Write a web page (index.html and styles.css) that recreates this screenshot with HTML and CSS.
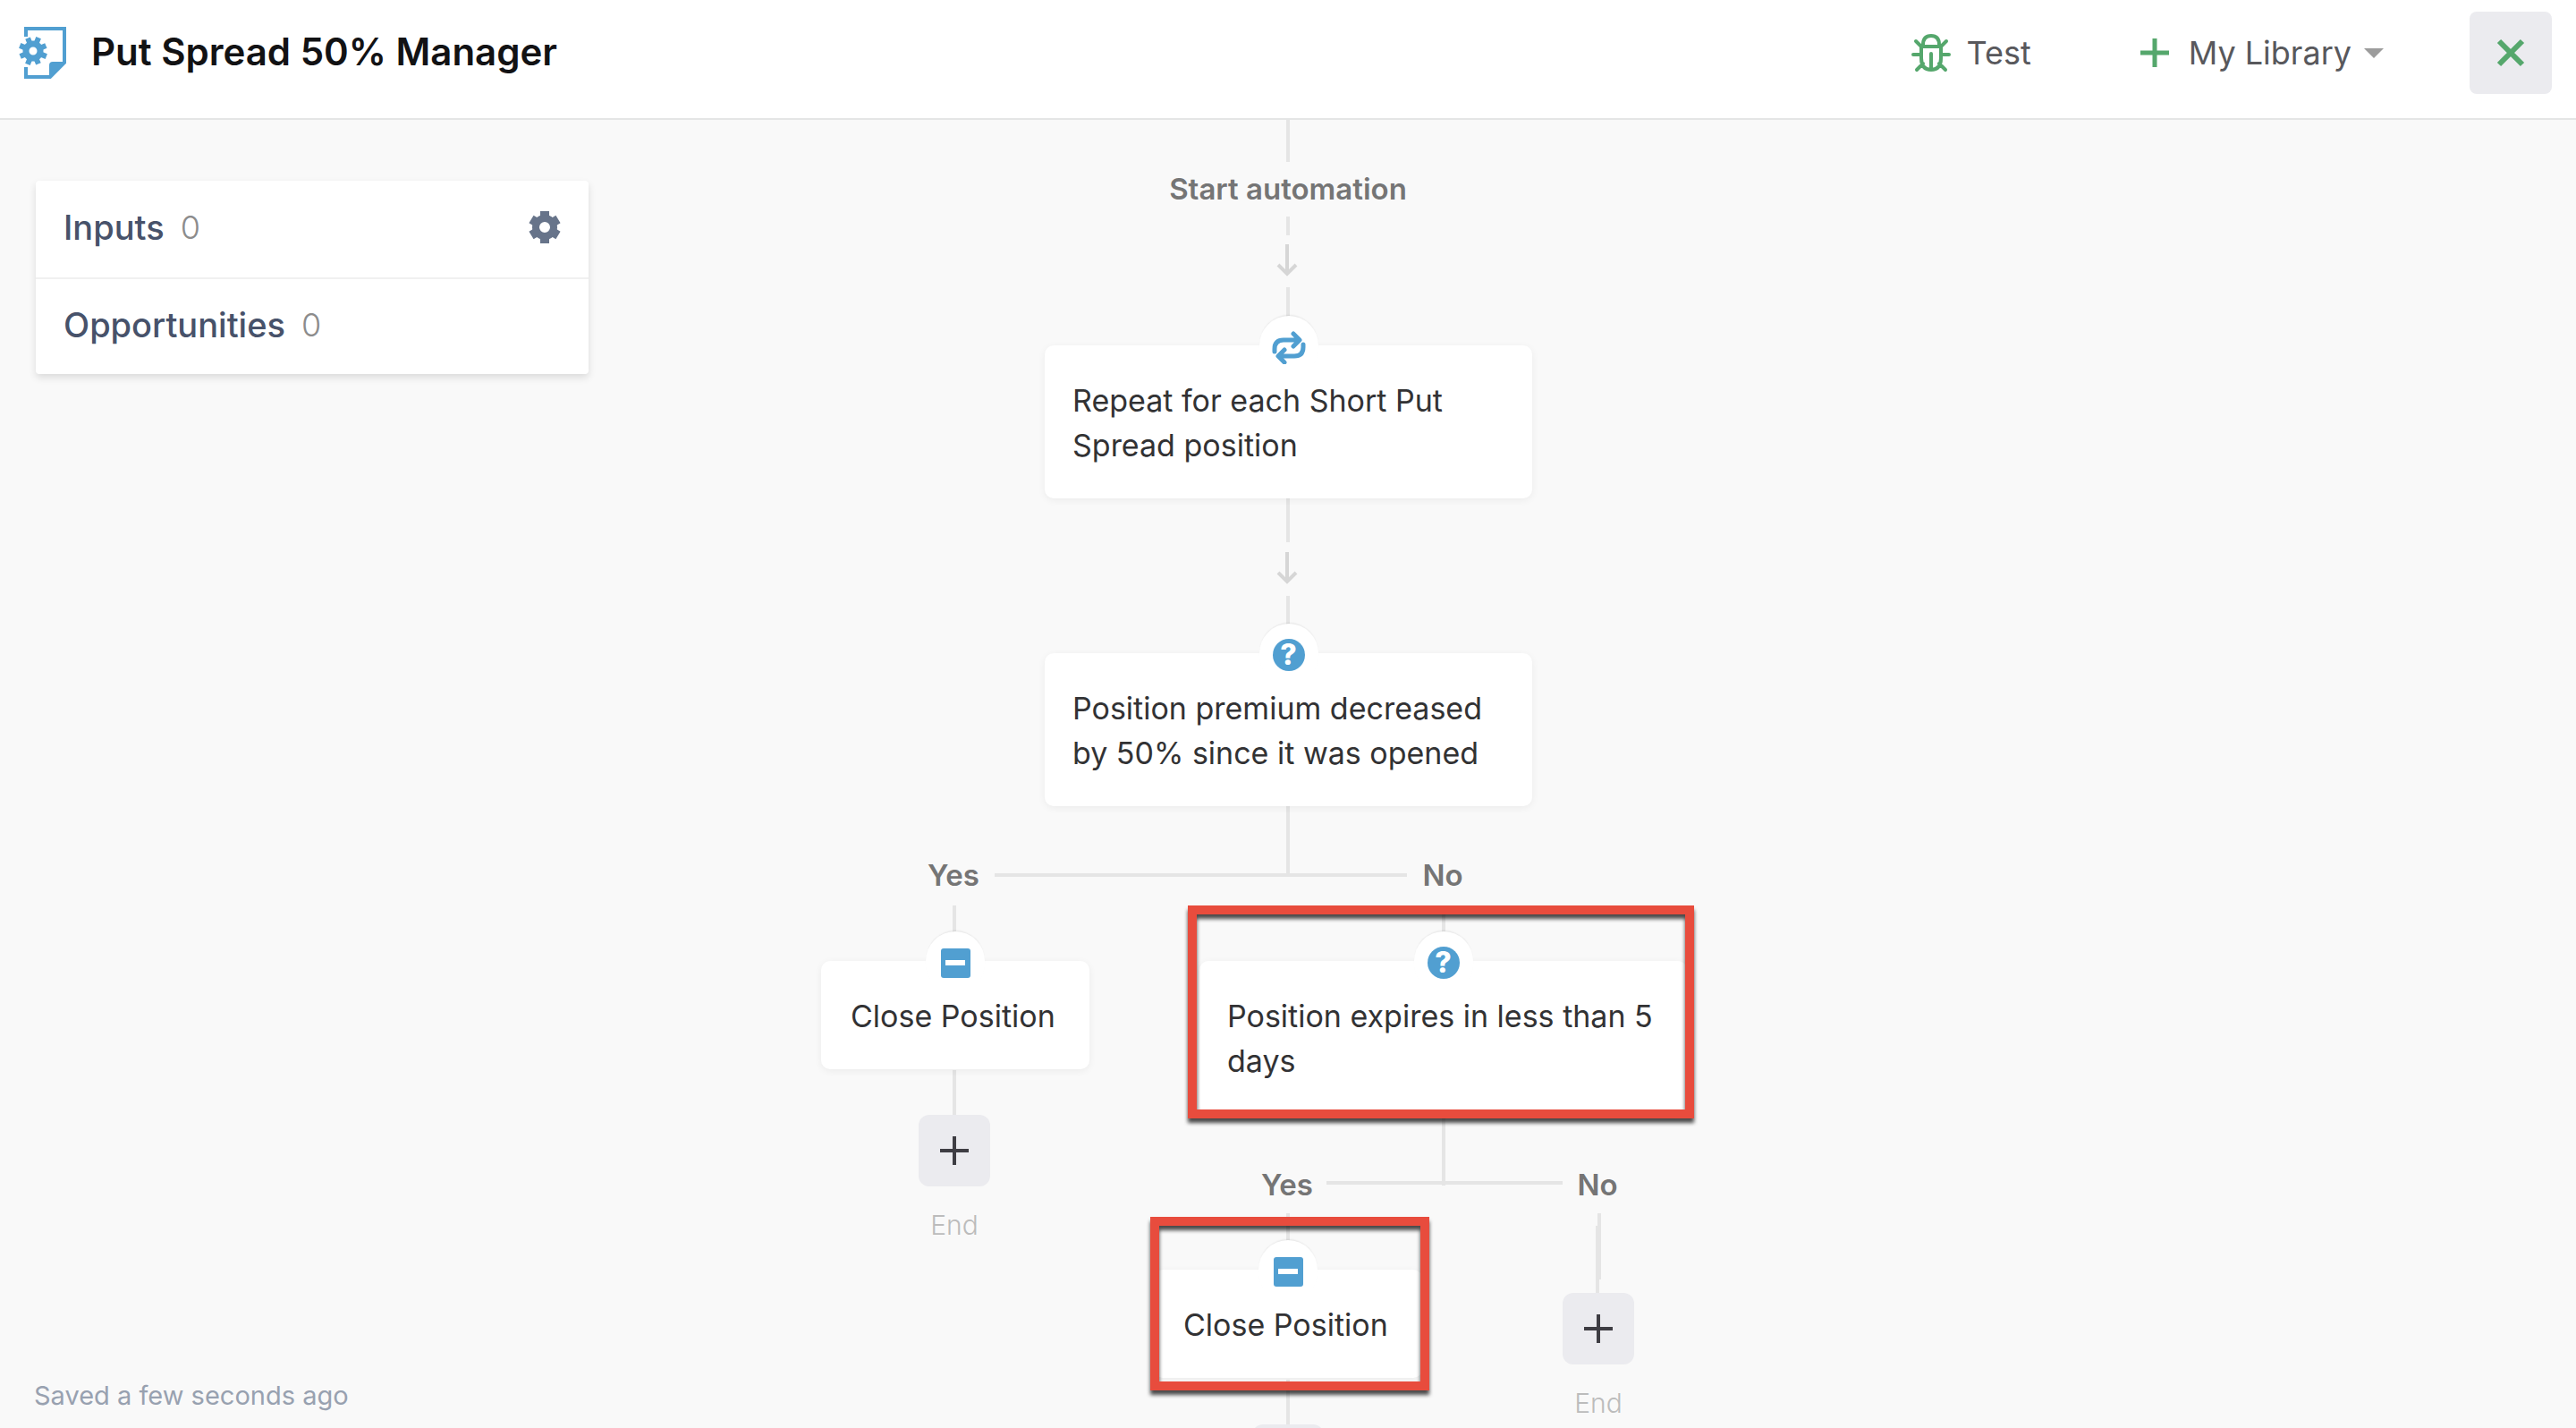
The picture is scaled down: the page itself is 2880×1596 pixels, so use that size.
FILE: index.html
```
<!DOCTYPE html>
<html lang="en">
<head>
    <meta charset="UTF-8">
    <meta name="viewport" content="width=device-width, initial-scale=1.0">
    <title>Put Spread 50% Manager</title>
    <link rel="stylesheet" href="styles.css">
</head>
<body>
    <header class="topbar">
        <svg class="logo" viewBox="0 0 54 60" width="54" height="60">
            <path d="M9 12V3H52V41L36 57H9V46" fill="none" stroke="#519fd1" stroke-width="4"/>
            <path d="M35 58V44Q35 40 39 40H53Z" fill="#519fd1"/>
            <g transform="rotate(22.5 17 28)" stroke="#519fd1" stroke-width="6">
                <path d="M17 12V44M1 28H33M6 17L28 39M28 17L6 39"/>
            </g>
            <circle cx="17" cy="28" r="8" fill="#fff" stroke="#519fd1" stroke-width="7"/>
        </svg>
        <h1>Put Spread 50% Manager</h1>
        <nav class="actions">
            <button class="link test" type="button">
                <svg viewBox="0 0 44 44" width="44" height="44" fill="none" stroke="#55a76c" stroke-width="4" stroke-linecap="round">
                    <path d="M12 15H32M11 15V28Q11 41 22 41T33 28V15M13 15V13Q13 3 22 3T31 13V15M22 23V40M2 24H11M33 24H42M5 9L11 15M39 9L33 15M6 41L13 34M38 41L31 34"/>
                </svg>
                Test
            </button>
            <button class="link library" type="button">
                <svg viewBox="0 0 32 32" width="32" height="32" stroke="#55a76c" stroke-width="5">
                    <path d="M16 0V32M0 16H32"/>
                </svg>
                My Library
                <span class="caret"></span>
            </button>
            <button class="close" type="button" aria-label="Close">
                <svg viewBox="0 0 32 32" width="32" height="32" stroke="#55a76c" stroke-width="6">
                    <path d="M3 3L29 29M29 3L3 29"/>
                </svg>
            </button>
        </nav>
    </header>

    <main class="canvas">
        <section class="panel">
            <div class="panel-row">
                <h2>Inputs</h2>
                <span class="count">0</span>
                <button class="settings" type="button" aria-label="Settings">
                    <svg viewBox="0 0 36 36" width="36" height="36">
                        <path d="M18 0V36M3 9L33 27M33 9L3 27" stroke="#67748a" stroke-width="10"/>
                        <circle cx="18" cy="18" r="10" fill="#fff" stroke="#67748a" stroke-width="8"/>
                    </svg>
                </button>
            </div>
            <div class="panel-row">
                <h2>Opportunities</h2>
                <span class="count">0</span>
            </div>
        </section>

        <div class="flow">
            <svg class="connectors" viewBox="0 0 1080 1462" width="1080" height="1462">
                <path d="M540 0V47M540 108V129M540 187V220"/>
                <path d="M540 423V472M540 532V566"/>
                <path d="M540 767V844M212 844H673"/>
                <path d="M167 878V910M167 1062V1112"/>
                <path d="M714 878V910M714 1111V1191M583 1188H847"/>
                <path d="M540 1222V1260M540 1408V1458"/>
                <path d="M888 1222V1296M886 1236V1312"/>
                <g class="arrow">
                    <path d="M539 139V172M529 162L539 172L549 162"/>
                    <path d="M539 483V516M529 506L539 516L549 506"/>
                </g>
            </svg>

            <span class="label start">Start automation</span>

            <div class="node repeat">
                <span class="badge">
                    <svg viewBox="0 0 38 38" width="38" height="38" fill="none" stroke="#519fd1" stroke-width="5" stroke-linecap="round" stroke-linejoin="round">
                        <path d="M3 24V21Q3 11 13 11H30M24 4L31 11L24 18M35 16V19Q35 29 25 29H8M14 22L7 29L14 36"/>
                    </svg>
                </span>
                Repeat for each Short Put Spread position
            </div>

            <div class="node premium">
                <span class="badge"><span class="question">?</span></span>
                Position premium decreased by 50% since it was opened
            </div>

            <span class="label yes-1">Yes</span>
            <span class="label no-1">No</span>

            <div class="node small close-1">
                <span class="badge"><span class="minus"></span></span>
                Close Position
            </div>
            <div class="add add-1">
                <button type="button" aria-label="Add step"></button>
                <span>End</span>
            </div>

            <div class="node expires">
                <span class="badge"><span class="question">?</span></span>
                Position expires in less than 5 days
            </div>

            <span class="label yes-2">Yes</span>
            <span class="label no-2">No</span>

            <div class="node small close-2">
                <span class="badge"><span class="minus"></span></span>
                Close Position
            </div>
            <div class="add add-2">
                <button type="button" aria-label="Add step"></button>
                <span>End</span>
            </div>
            <div class="add add-3">
                <button type="button" aria-label="Add step"></button>
            </div>

            <div class="frame frame-expires"></div>
            <div class="frame frame-close"></div>
        </div>

        <p class="saved">Saved a few seconds ago</p>
    </main>
</body>
</html>
```
FILE: styles.css
```
* {
    box-sizing: border-box;
}

body {
    margin: 0;
    height: 100vh;
    display: flex;
    flex-direction: column;
    font-family: Inter, "Liberation Sans", sans-serif;
    background-color: #f9f9f9;
    color: #323234;
}

button {
    border: none;
    padding: 0;
    background: none;
    font-family: inherit;
    cursor: pointer;
}

svg {
    display: block;
    flex: none;
}

/* Top bar */
.topbar {
    display: flex;
    align-items: center;
    padding: 13px 27px 27px 20px;
    background-color: #fff;
    border-bottom: 2px solid #e4e5e5;
}

.topbar h1 {
    margin: 0 0 0 28px;
    padding-bottom: 2px;
    font-size: 42px;
    font-weight: 600;
    line-height: 50px;
    color: #121214;
}

.actions {
    display: flex;
    align-items: center;
    margin-left: auto;
}

.link {
    display: flex;
    align-items: center;
    font-size: 36px;
    line-height: 50px;
    color: #58585c;
}

.test {
    gap: 18px;
    margin-right: 122px;
}

.library {
    gap: 22px;
    margin-right: 96px;
}

.caret {
    margin-left: -8px;
    border: 11px solid transparent;
    border-top-color: #9c9c9c;
    border-bottom: none;
}

.close {
    display: flex;
    align-items: center;
    justify-content: center;
    width: 92px;
    height: 92px;
    border-radius: 8px;
    background-color: #ebebef;
}

/* Canvas */
.canvas {
    position: relative;
    flex: 1;
    overflow: hidden;
}

.panel {
    position: absolute;
    left: 40px;
    top: 68px;
    width: 618px;
    background-color: #fff;
    border-radius: 4px;
    box-shadow: 0 4px 8px rgba(0, 0, 0, 0.12);
}

.panel-row {
    display: flex;
    align-items: center;
    height: 108px;
    padding: 0 31px 4px;
}

.panel-row + .panel-row {
    border-top: 2px solid #f0f0f0;
}

.panel h2 {
    margin: 0 18px 0 0;
    font-size: 38px;
    font-weight: 500;
    line-height: 48px;
    color: #47526a;
}

.count {
    font-size: 36px;
    font-weight: 300;
    color: #8c8c8c;
}

.settings {
    margin-left: auto;
}

.saved {
    position: absolute;
    left: 38px;
    bottom: 18px;
    margin: 0;
    font-size: 29px;
    line-height: 36px;
    color: #98a1b0;
}

/* Flow diagram */
.flow {
    position: relative;
    width: 1080px;
    height: 1462px;
    margin: 0 auto;
}

.connectors {
    position: absolute;
    fill: none;
    stroke: #e5e5e5;
    stroke-width: 4px;
}

.arrow {
    stroke: #d6d6d6;
}

.label {
    position: absolute;
    width: 300px;
    font-size: 33px;
    font-weight: 600;
    line-height: 40px;
    text-align: center;
    color: #757575;
}

.node {
    position: absolute;
    width: 545px;
    padding: 37px 31px 34px;
    border-radius: 10px;
    background-color: #fff;
    box-shadow: 0 2px 8px rgba(0, 0, 0, 0.06);
    font-size: 34px;
    line-height: 50px;
}

.node.small {
    width: 300px;
    padding-left: 33px;
    white-space: nowrap;
}

.badge {
    position: absolute;
    top: -33px;
    left: 50%;
    display: flex;
    align-items: center;
    justify-content: center;
    width: 66px;
    height: 70px;
    margin-left: -33px;
    border-radius: 33px;
    background-color: #fff;
    box-shadow: 0 -2px 2px -1px rgba(0, 0, 0, 0.08);
}

.question {
    width: 36px;
    height: 36px;
    border-radius: 50%;
    background-color: #519fd1;
    color: #fff;
    font-size: 32px;
    font-weight: 800;
    line-height: 36px;
    text-align: center;
}

.minus {
    display: flex;
    align-items: center;
    justify-content: center;
    width: 33px;
    height: 33px;
    border-radius: 3px;
    background-color: #519fd1;
}

.minus::before {
    content: "";
    width: 22px;
    height: 6px;
    background-color: #fff;
}

.add {
    position: absolute;
    width: 80px;
    text-align: center;
}

.add button {
    display: block;
    width: 80px;
    height: 80px;
    border-radius: 12px;
    background: linear-gradient(#3e3d43, #3e3d43) center / 32px 4px no-repeat,
        linear-gradient(#3e3d43, #3e3d43) center / 4px 32px no-repeat #ebebef;
}

.add span {
    display: block;
    margin-top: 23px;
    font-size: 30px;
    font-weight: 300;
    line-height: 40px;
    color: #bcbcbc;
}

.frame {
    position: absolute;
    border: 10px solid #e84c3d;
    filter: drop-shadow(0 5px 2px rgba(0, 0, 0, 0.7));
}

/* Node positions on the canvas */
.start { left: 390px; top: 57px; }
.repeat { left: 268px; top: 252px; }
.premium { left: 268px; top: 596px; }
.yes-1 { left: 16px; top: 824px; }
.no-1 { left: 563px; top: 824px; }
.close-1 { left: 18px; top: 940px; }
.add-1 { left: 127px; top: 1112px; }
.expires { left: 441px; top: 940px; }
.yes-2 { left: 389px; top: 1170px; }
.no-2 { left: 736px; top: 1170px; }
.close-2 { left: 390px; top: 1285px; }
.add-2 { left: 847px; top: 1311px; }
.add-3 { left: 500px; top: 1458px; }
.frame-expires { left: 428px; top: 878px; width: 566px; height: 238px; }
.frame-close { left: 386px; top: 1226px; width: 312px; height: 194px; }
```
